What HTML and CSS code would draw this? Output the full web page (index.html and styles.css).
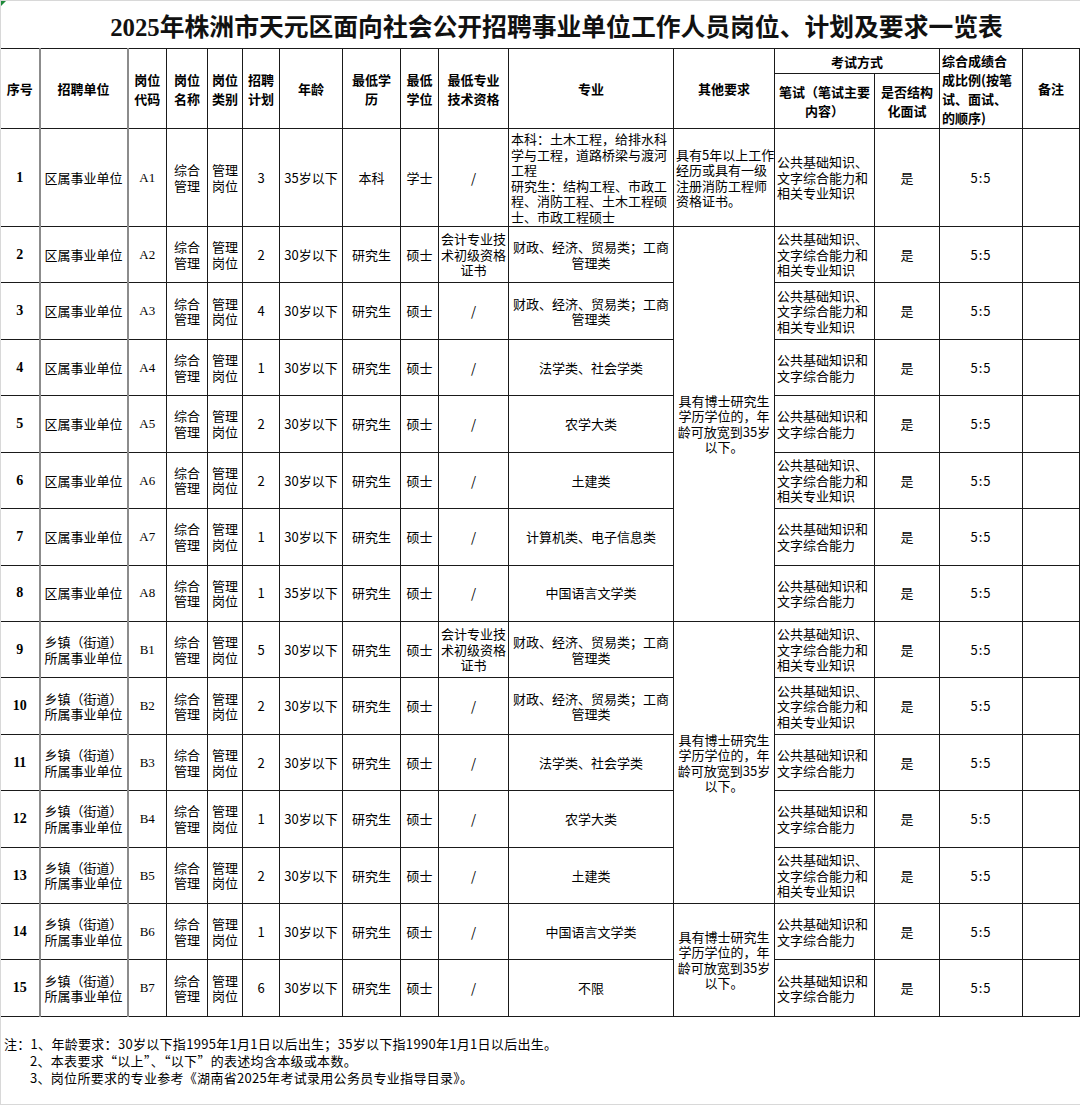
FILE: index.html
```html
<!DOCTYPE html>
<html lang="zh-CN">
<head>
<meta charset="utf-8">
<title>2025年株洲市天元区面向社会公开招聘事业单位工作人员岗位、计划及要求一览表</title>
<link rel="stylesheet" href="styles.css">
</head>
<body>
<div class="sheet">
  <span class="corner"></span>
  <h1 class="title">2025年株洲市天元区面向社会公开招聘事业单位工作人员岗位、计划及要求一览表</h1>
  <table class="grid">
    <colgroup>
      <col style="width:39px"><col style="width:88px"><col style="width:39px"><col style="width:41px">
      <col style="width:35px"><col style="width:37px"><col style="width:63px"><col style="width:58px">
      <col style="width:38px"><col style="width:70px"><col style="width:165px"><col style="width:101px">
      <col style="width:100px"><col style="width:65px"><col style="width:83px"><col style="width:57px">
    </colgroup>
    <thead>
      <tr class="h1">
        <th rowspan="2" class="gl">序号</th>
        <th rowspan="2" class="gl">招聘单位</th>
        <th rowspan="2">岗位<br>代码</th>
        <th rowspan="2">岗位<br>名称</th>
        <th rowspan="2">岗位<br>类别</th>
        <th rowspan="2">招聘<br>计划</th>
        <th rowspan="2">年龄</th>
        <th rowspan="2">最低学<br>历</th>
        <th rowspan="2">最低<br>学位</th>
        <th rowspan="2">最低专业<br>技术资格</th>
        <th rowspan="2">专业</th>
        <th rowspan="2">其他要求</th>
        <th colspan="2">考试方式</th>
        <th rowspan="2" class="left">综合成绩合<br>成比例(按笔<br>试、面试、<br>的顺序)</th>
        <th rowspan="2">备注</th>
      </tr>
      <tr class="h2">
        <th>笔试（笔试主要<br>内容）</th>
        <th>是否结构<br>化面试</th>
      </tr>
    </thead>
    <tbody>
      <tr class="r1">
        <td class="no gl">1</td><td class="gl">区属事业单位</td><td class="code">A1</td><td>综合<br>管理</td><td>管理<br>岗位</td><td>3</td><td>35岁以下</td><td>本科</td><td>学士</td><td>/</td>
        <td class="left">本科：土木工程，给排水科<br>学与工程，道路桥梁与渡河<br>工程<br>研究生：结构工程、市政工<br>程、消防工程、土木工程硕<br>士、市政工程硕士</td>
        <td class="left">具有5年以上工作<br>经历或具有一级<br>注册消防工程师<br>资格证书。</td>
        <td class="left">公共基础知识、<br>文字综合能力和<br>相关专业知识</td><td>是</td><td class="ratio">5:5</td><td></td>
      </tr>
      <tr class="r">
        <td class="no gl">2</td><td class="gl">区属事业单位</td><td class="code">A2</td><td>综合<br>管理</td><td>管理<br>岗位</td><td>2</td><td>30岁以下</td><td>研究生</td><td>硕士</td><td>会计专业技<br>术初级资格<br>证书</td>
        <td>财政、经济、贸易类；工商<br>管理类</td>
        <td rowspan="7">具有博士研究生<br>学历学位的，年<br>龄可放宽到35岁<br>以下。</td>
        <td class="left">公共基础知识、<br>文字综合能力和<br>相关专业知识</td><td>是</td><td class="ratio">5:5</td><td></td>
      </tr>
      <tr class="r">
        <td class="no gl">3</td><td class="gl">区属事业单位</td><td class="code">A3</td><td>综合<br>管理</td><td>管理<br>岗位</td><td>4</td><td>30岁以下</td><td>研究生</td><td>硕士</td><td>/</td>
        <td>财政、经济、贸易类；工商<br>管理类</td>
        <td class="left">公共基础知识、<br>文字综合能力和<br>相关专业知识</td><td>是</td><td class="ratio">5:5</td><td></td>
      </tr>
      <tr class="r">
        <td class="no gl">4</td><td class="gl">区属事业单位</td><td class="code">A4</td><td>综合<br>管理</td><td>管理<br>岗位</td><td>1</td><td>30岁以下</td><td>研究生</td><td>硕士</td><td>/</td>
        <td>法学类、社会学类</td>
        <td class="left">公共基础知识和<br>文字综合能力</td><td>是</td><td class="ratio">5:5</td><td></td>
      </tr>
      <tr class="r">
        <td class="no gl">5</td><td class="gl">区属事业单位</td><td class="code">A5</td><td>综合<br>管理</td><td>管理<br>岗位</td><td>2</td><td>30岁以下</td><td>研究生</td><td>硕士</td><td>/</td>
        <td>农学大类</td>
        <td class="left">公共基础知识和<br>文字综合能力</td><td>是</td><td class="ratio">5:5</td><td></td>
      </tr>
      <tr class="r">
        <td class="no gl">6</td><td class="gl">区属事业单位</td><td class="code">A6</td><td>综合<br>管理</td><td>管理<br>岗位</td><td>2</td><td>30岁以下</td><td>研究生</td><td>硕士</td><td>/</td>
        <td>土建类</td>
        <td class="left">公共基础知识、<br>文字综合能力和<br>相关专业知识</td><td>是</td><td class="ratio">5:5</td><td></td>
      </tr>
      <tr class="r">
        <td class="no gl">7</td><td class="gl">区属事业单位</td><td class="code">A7</td><td>综合<br>管理</td><td>管理<br>岗位</td><td>1</td><td>30岁以下</td><td>研究生</td><td>硕士</td><td>/</td>
        <td>计算机类、电子信息类</td>
        <td class="left">公共基础知识和<br>文字综合能力</td><td>是</td><td class="ratio">5:5</td><td></td>
      </tr>
      <tr class="r">
        <td class="no gl">8</td><td class="gl">区属事业单位</td><td class="code">A8</td><td>综合<br>管理</td><td>管理<br>岗位</td><td>1</td><td>35岁以下</td><td>研究生</td><td>硕士</td><td>/</td>
        <td>中国语言文学类</td>
        <td class="left">公共基础知识和<br>文字综合能力</td><td>是</td><td class="ratio">5:5</td><td></td>
      </tr>
      <tr class="r">
        <td class="no gl">9</td><td class="gl">乡镇（街道）<br>所属事业单位</td><td class="code">B1</td><td>综合<br>管理</td><td>管理<br>岗位</td><td>5</td><td>30岁以下</td><td>研究生</td><td>硕士</td><td>会计专业技<br>术初级资格<br>证书</td>
        <td>财政、经济、贸易类；工商<br>管理类</td>
        <td rowspan="5">具有博士研究生<br>学历学位的，年<br>龄可放宽到35岁<br>以下。</td>
        <td class="left">公共基础知识、<br>文字综合能力和<br>相关专业知识</td><td>是</td><td class="ratio">5:5</td><td></td>
      </tr>
      <tr class="r">
        <td class="no gl">10</td><td class="gl">乡镇（街道）<br>所属事业单位</td><td class="code">B2</td><td>综合<br>管理</td><td>管理<br>岗位</td><td>2</td><td>30岁以下</td><td>研究生</td><td>硕士</td><td>/</td>
        <td>财政、经济、贸易类；工商<br>管理类</td>
        <td class="left">公共基础知识、<br>文字综合能力和<br>相关专业知识</td><td>是</td><td class="ratio">5:5</td><td></td>
      </tr>
      <tr class="r">
        <td class="no gl">11</td><td class="gl">乡镇（街道）<br>所属事业单位</td><td class="code">B3</td><td>综合<br>管理</td><td>管理<br>岗位</td><td>2</td><td>30岁以下</td><td>研究生</td><td>硕士</td><td>/</td>
        <td>法学类、社会学类</td>
        <td class="left">公共基础知识和<br>文字综合能力</td><td>是</td><td class="ratio">5:5</td><td></td>
      </tr>
      <tr class="r">
        <td class="no gl">12</td><td class="gl">乡镇（街道）<br>所属事业单位</td><td class="code">B4</td><td>综合<br>管理</td><td>管理<br>岗位</td><td>1</td><td>30岁以下</td><td>研究生</td><td>硕士</td><td>/</td>
        <td>农学大类</td>
        <td class="left">公共基础知识和<br>文字综合能力</td><td>是</td><td class="ratio">5:5</td><td></td>
      </tr>
      <tr class="r">
        <td class="no gl">13</td><td class="gl">乡镇（街道）<br>所属事业单位</td><td class="code">B5</td><td>综合<br>管理</td><td>管理<br>岗位</td><td>2</td><td>30岁以下</td><td>研究生</td><td>硕士</td><td>/</td>
        <td>土建类</td>
        <td class="left">公共基础知识、<br>文字综合能力和<br>相关专业知识</td><td>是</td><td class="ratio">5:5</td><td></td>
      </tr>
      <tr class="r">
        <td class="no gl">14</td><td class="gl">乡镇（街道）<br>所属事业单位</td><td class="code">B6</td><td>综合<br>管理</td><td>管理<br>岗位</td><td>1</td><td>30岁以下</td><td>研究生</td><td>硕士</td><td>/</td>
        <td>中国语言文学类</td>
        <td rowspan="2">具有博士研究生<br>学历学位的，年<br>龄可放宽到35岁<br>以下。</td>
        <td class="left">公共基础知识和<br>文字综合能力</td><td>是</td><td class="ratio">5:5</td><td></td>
      </tr>
      <tr class="r">
        <td class="no gl">15</td><td class="gl">乡镇（街道）<br>所属事业单位</td><td class="code">B7</td><td>综合<br>管理</td><td>管理<br>岗位</td><td>6</td><td>30岁以下</td><td>研究生</td><td>硕士</td><td>/</td>
        <td>不限</td>
        <td class="left">公共基础知识和<br>文字综合能力</td><td>是</td><td class="ratio">5:5</td><td></td>
      </tr>
    </tbody>
  </table>
  <div class="notes">
    <p class="note-first">注：1、年龄要求：30岁以下指1995年1月1日以后出生；35岁以下指1990年1月1日以后出生。</p>
    <p class="note-sub">2、本表要求“以上”、“以下”的表述均含本级或本数。</p>
    <p class="note-sub">3、岗位所要求的专业参考《湖南省2025年考试录用公务员专业指导目录》。</p>
  </div>
</div>
</body>
</html>
```

FILE: styles.css
```css
html, body {
  margin: 0;
  padding: 0;
  background: #ffffff;
}

.sheet {
  position: relative;
  width: 1080px;
  height: 1105px;
  box-sizing: border-box;
  border-left: 1px solid #d8d8d8;
  border-top: 1px solid #d8d8d8;
  border-bottom: 1px solid #d8d8d8;
  font-family: "Noto Sans CJK SC", "Noto Sans", sans-serif;
  color: #000;
  overflow: hidden;
}

.corner {
  position: absolute;
  left: 0;
  top: 0;
  width: 0;
  height: 0;
  border-top: 5px solid #1f8a3a;
  border-right: 5px solid transparent;
}

.title {
  margin: 0;
  height: 47px;
  padding-left: 32px;
  box-sizing: border-box;
  display: flex;
  align-items: center;
  justify-content: center;
  font-family: "Liberation Serif", "Noto Sans CJK SC", serif;
  font-size: 24.8px;
  font-weight: 700;
  letter-spacing: 0;
  color: #111;
}

.grid {
  width: 1079px;
  margin-left: -1px;
  border-collapse: collapse;
  table-layout: fixed;
  font-size: 13px;
  line-height: 15.5px;
}

.grid th,
.grid td {
  border: 1px solid #1a1a1a;
  padding: 0 2px;
  text-align: center;
  vertical-align: middle;
  overflow: hidden;
  white-space: nowrap;
  font-weight: 400;
}

.grid th {
  font-weight: 700;
  line-height: 19px;
}

.grid .gl {
  border-right: 2px solid #8c8c8c;
}

.grid .left {
  text-align: left;
}

.h1 {
  height: 25px;
}

.h2 {
  height: 55px;
}

.r1 {
  height: 98px;
}

.r {
  height: 56.43px;
}

.grid td.no {
  font-family: "Liberation Serif", serif;
  font-weight: 700;
  font-size: 14px;
}

.grid td.code {
  font-family: "Liberation Serif", serif;
  font-size: 13px;
}

.grid td.ratio {
  letter-spacing: 1px;
}

.notes {
  padding-top: 18px;
  font-size: 13px;
  line-height: 17px;
  letter-spacing: 0.3px;
}

.notes p {
  margin: 0;
  white-space: nowrap;
}

.note-first {
  padding-left: 3px;
}

.note-sub {
  padding-left: 29px;
}
```
